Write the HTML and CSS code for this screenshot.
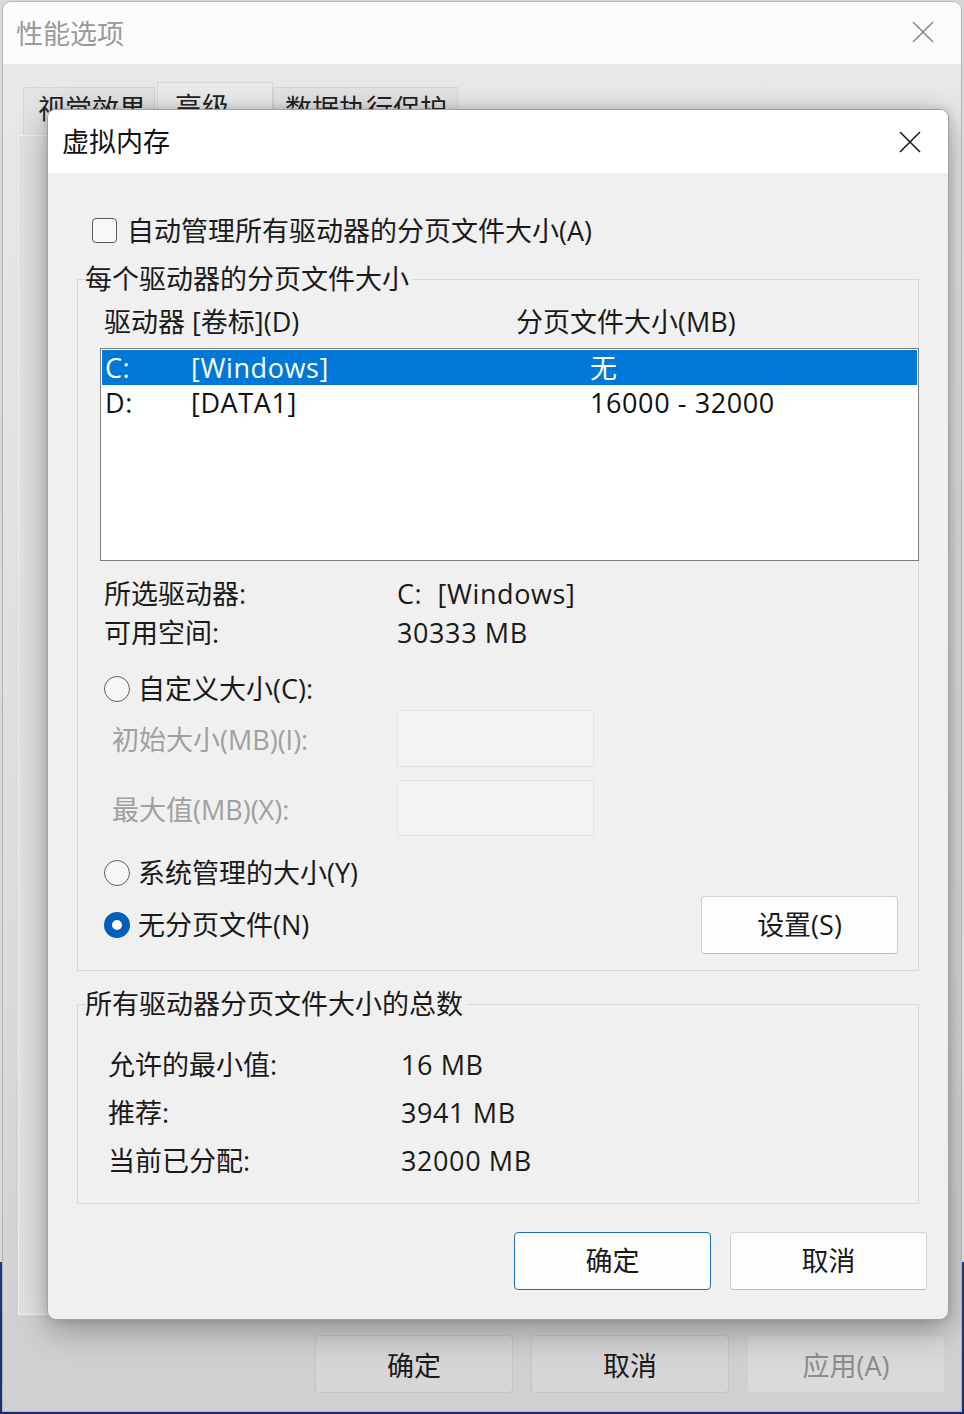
FILE: index.html
```html
<!DOCTYPE html>
<html lang="zh-CN">
<head>
<meta charset="utf-8">
<title>虚拟内存</title>
<link rel="stylesheet" href="styles.css">
</head>
<body>
<div class="window">
  <div class="win-title">
    <span class="win-title-text">性能选项</span>
    <svg class="win-close" width="24" height="24" viewBox="0 0 24 24"><path d="M2 2 L22 22 M22 2 L2 22" stroke="#8a8a8a" stroke-width="1.6" fill="none"/></svg>
  </div>
  <div class="win-body">
    <div class="tabs">
      <div class="tab tab1">视觉效果</div>
      <div class="tab tab2 active">高级</div>
      <div class="tab tab3">数据执行保护</div>
    </div>
    <div class="tab-panel"></div>
    <div class="win-buttons">
      <button class="bg-btn">确定</button>
      <button class="bg-btn">取消</button>
      <button class="bg-btn disabled">应用(A)</button>
    </div>
  </div>

  <div class="dialog">
    <div class="dlg-title">
      <span class="dlg-title-text">虚拟内存</span>
      <svg class="dlg-close" width="22" height="22" viewBox="0 0 22 22"><path d="M1 1 L21 21 M21 1 L1 21" stroke="#1a1a1a" stroke-width="1.6" fill="none"/></svg>
    </div>
    <div class="dlg-body">
      <div class="check-row">
        <span class="checkbox"></span>
        <span>自动管理所有驱动器的分页文件大小(A)</span>
      </div>

      <fieldset class="group group1">
        <legend>每个驱动器的分页文件大小</legend>
        <div class="g1-inner">
          <div class="list-head">
            <span class="lh-drive">驱动器 [卷标](D)</span>
            <span>分页文件大小(MB)</span>
          </div>
          <div class="listbox">
            <div class="lrow selected"><span class="c1 v">C:</span><span class="c2 v">[Windows]</span><span class="c3">无</span></div>
            <div class="lrow"><span class="c1 v">D:</span><span class="c2 v">[DATA1]</span><span class="c3 v">16000 - 32000</span></div>
          </div>
          <div class="info">
            <div class="info-row"><span class="info-label">所选驱动器:</span><span class="v">C:&nbsp; [Windows]</span></div>
            <div class="info-row"><span class="info-label">可用空间:</span><span class="v">30333 MB</span></div>
          </div>
          <div class="radio-row r-custom"><span class="radio"></span><span>自定义大小(C):</span></div>
          <div class="field-row f1"><span class="field-label">初始大小(MB)(I):</span><span class="field-input"></span></div>
          <div class="field-row f2"><span class="field-label">最大值(MB)(X):</span><span class="field-input"></span></div>
          <div class="radio-row r-system"><span class="radio"></span><span>系统管理的大小(Y)</span></div>
          <div class="radio-row r-none"><span class="radio on"></span><span>无分页文件(N)</span><button class="btn set-btn">设置(S)</button></div>
        </div>
      </fieldset>

      <fieldset class="group group2">
        <legend>所有驱动器分页文件大小的总数</legend>
        <div class="g2-inner">
          <div class="total-row"><span class="total-label">允许的最小值:</span><span class="v">16 MB</span></div>
          <div class="total-row"><span class="total-label">推荐:</span><span class="v">3941 MB</span></div>
          <div class="total-row"><span class="total-label">当前已分配:</span><span class="v">32000 MB</span></div>
        </div>
      </fieldset>

      <div class="dlg-buttons">
        <button class="btn default">确定</button>
        <button class="btn">取消</button>
      </div>
    </div>
  </div>
</div>
</body>
</html>
```

FILE: styles.css
```css
* { box-sizing: border-box; }

html, body {
  margin: 0;
  height: 1414px;
  background: linear-gradient(to bottom, #d9d9d9 0, #d9d9d9 1262px, #22347a 1262px, #1d2d6e 100%);
}

body {
  padding: 1px 2px 0 2px;
  font-family: "Open Sans", "Noto Sans CJK SC", sans-serif;
  font-size: 27px;
  color: #1a1a1a;
}

button {
  font-family: inherit;
  font-size: 27px;
  color: #1a1a1a;
}

.v { letter-spacing: 0.6px; }

/* ---------- background window ---------- */
.window {
  position: relative;
  width: 960px;
  height: 1411px;
  border: 1px solid #b4b4b4;
  border-radius: 9px 9px 0 0;
  background: #e6e6e6;
  overflow: hidden;
}

.win-title {
  height: 62px;
  background: #fcfcfc;
  display: flex;
  align-items: center;
  padding-left: 13px;
  padding-right: 26px;
}

.win-title-text {
  flex: 1;
  color: #9a9a9a;
  line-height: 34px;
  padding-top: 1px;
}

.win-close { display: block; margin-top: -2px; }

.win-body {
  height: 1347px;
  padding-top: 18px;
  background: linear-gradient(to bottom, #e9e9e9 0, #dedede 60%, #d0d0d0 100%);
}

.tabs {
  display: flex;
  align-items: flex-end;
  height: 53px;
  padding-left: 20px;
}

.tab {
  height: 48px;
  border: 1px solid #d6d6d6;
  border-bottom: none;
  background: #e4e4e4;
  color: #222;
  line-height: 34px;
  padding-top: 4px;
}

.tab1 { width: 132px; padding-left: 14px; }
.tab2 { width: 116px; padding-left: 17px; margin-left: 2px; }
.tab3 { width: 185px; padding-left: 11px; }

.tab.active {
  height: 53px;
  background: #ececec;
  padding-top: 7px;
}

.tab-panel {
  margin-left: 15px;
  width: 927px;
  height: 1180px;
  border: 1px solid #f2f2f2;
  background: #e4e4e4;
}

.win-buttons {
  display: flex;
  justify-content: flex-end;
  gap: 18px;
  margin-top: 20px;
  padding-right: 16px;
}

.bg-btn {
  width: 198px;
  height: 58px;
  border: 1px solid #c4c4c4;
  border-radius: 4px;
  background: #d6d6d6;
  padding: 0;
}

.bg-btn.disabled { color: #8c8c8c; background: #dadada; border-color: #d2d2d2; }

/* ---------- dialog ---------- */
.dialog {
  position: absolute;
  left: 44px;
  top: 107px;
  width: 902px;
  height: 1211px;
  border: 1px solid #a2a2a2;
  border-radius: 9px;
  background: #f0f0f0;
  overflow: hidden;
  box-shadow: 0 10px 36px rgba(0, 0, 0, 0.34), 0 0 8px rgba(0, 0, 0, 0.14);
}

.dlg-title {
  height: 63px;
  background: #ffffff;
  display: flex;
  align-items: center;
  padding-left: 14px;
  padding-right: 27px;
}

.dlg-title-text {
  flex: 1;
  color: #111;
  line-height: 34px;
}

.dlg-close { display: block; }

.dlg-body {
  padding: 40px 29px 0 29px;
}

.check-row {
  display: flex;
  align-items: center;
  height: 34px;
  padding-left: 15px;
  gap: 10px;
  line-height: 34px;
}

.check-row span:last-child { padding-top: 1px; }

.checkbox {
  width: 25px;
  height: 25px;
  border: 1px solid #5a5a5a;
  border-radius: 4px;
  background: #f8f8f8;
  flex: none;
}

.group {
  margin: 15px 0 0 0;
  padding: 0;
  border: 1px solid #d8d8d8;
  min-width: 0;
}

.group legend {
  margin-left: 7px;
  padding: 0 3px 0 0;
  line-height: 34px;
  height: 34px;
}

.g1-inner {
  padding: 9px 0 16px 22px;
}

.list-head {
  display: flex;
  height: 34px;
  line-height: 34px;
  padding-left: 4px;
}

.lh-drive { width: 412px; }

.listbox {
  margin-top: 9px;
  margin-right: -1px;
  height: 213px;
  border: 1px solid #7d7d7d;
  background: #ffffff;
  padding: 1px;
}

.lrow {
  display: flex;
  height: 35px;
  line-height: 35px;
  padding-left: 3px;
  color: #111;
}

.lrow.selected {
  background: #0078d7;
  color: #ffffff;
}

.c1 { width: 86px; }
.c2 { width: 399px; }

.info { margin-top: 13px; }

.info-row {
  display: flex;
  height: 39px;
  line-height: 39px;
  padding-left: 4px;
}

.info-label { width: 293px; }

.radio-row {
  display: flex;
  align-items: center;
  gap: 8px;
  height: 40px;
  line-height: 40px;
  padding-left: 4px;
}

.radio {
  width: 26px;
  height: 26px;
  border-radius: 50%;
  border: 1px solid #606060;
  background: #f6f6f6;
  flex: none;
}

.radio.on {
  border: 8px solid #005fb8;
  background: #ffffff;
}

.r-custom { margin-top: 17px; }

.field-row {
  display: flex;
  align-items: center;
  padding-left: 12px;
  color: #a0a0a0;
}

.field-row.f1 { margin-top: 1px; height: 57px; }
.field-row.f2 { margin-top: 13px; height: 56px; }

.field-label { width: 285px; }

.field-input {
  width: 197px;
  height: 100%;
  border: 1px solid #e2e2e2;
  background: #f3f3f3;
  border-radius: 2px;
}

.r-system { margin-top: 17px; }

.r-none {
  margin-top: 3px;
  height: 58px;
}

.btn {
  width: 197px;
  height: 58px;
  padding: 0;
  border: 1px solid #d0d0d0;
  border-bottom-color: #bdbdbd;
  border-radius: 4px;
  background: #fdfdfd;
  line-height: 34px;
}

.set-btn {
  margin-left: auto;
  margin-right: 20px;
}

.group2 { margin-top: 16px; }

.g2-inner {
  padding: 20px 0 18px 30px;
}

.total-row {
  display: flex;
  height: 48px;
  line-height: 48px;
}

.total-label { width: 293px; }

.dlg-buttons {
  display: flex;
  justify-content: flex-end;
  gap: 19px;
  margin-top: 28px;
  margin-right: -8px;
}

.btn.default {
  border: 1px solid #1f6fb5;
}
```
